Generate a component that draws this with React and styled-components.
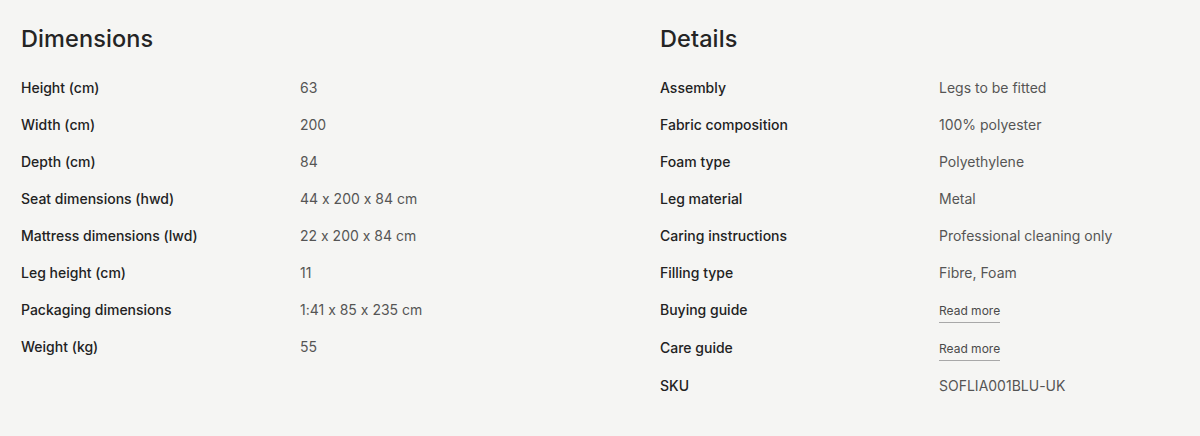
import React from "react";
import styled, { createGlobalStyle } from "styled-components";

const Global = createGlobalStyle`
  html, body { margin: 0; padding: 0; background: #f5f5f3; }
  body {
    font-family: Inter, "Noto Sans", sans-serif;
    font-feature-settings: "calt" 0;
    -webkit-font-smoothing: antialiased;
  }
`;

const Page = styled.div`
  display: grid;
  grid-template-columns: 639px 1fr;
  padding: 26px 21px 0 21px;
  height: 436px;
  box-sizing: border-box;
`;

const Section = styled.section`
  display: flex;
  flex-direction: column;
`;

const Heading = styled.h2`
  margin: 0 0 24px 0;
  font-size: 23.5px;
  line-height: 26px;
  font-weight: 500;
  color: #242424;
  letter-spacing: 0.1px;
`;

const Table = styled.dl`
  margin: 0;
  display: grid;
  grid-template-columns: 279px 1fr;
  grid-auto-rows: auto;
`;

const Label = styled.dt`
  margin: 0;
  font-size: 14px;
  line-height: 24px;
  font-weight: 500;
  color: #222;
  min-height: ${(p) => (p.$link ? "38px" : "37px")};
`;

const Value = styled.dd`
  margin: 0;
  font-size: 14px;
  line-height: 24px;
  font-weight: 400;
  color: #555;
`;

const ReadMore = styled.a`
  display: inline-block;
  font-size: 12px;
  line-height: 16px;
  color: #4a4a4a;
  text-decoration: none;
  padding: 5px 0 3px;
  border-bottom: 1px solid #a8a8a8;
`;

const dimensions = [
  ["Height (cm)", "63"],
  ["Width (cm)", "200"],
  ["Depth (cm)", "84"],
  ["Seat dimensions (hwd)", "44 x 200 x 84 cm"],
  ["Mattress dimensions (lwd)", "22 x 200 x 84 cm"],
  ["Leg height (cm)", "11"],
  ["Packaging dimensions", "1:41 x 85 x 235 cm"],
  ["Weight (kg)", "55"],
];

const details = [
  ["Assembly", "Legs to be fitted"],
  ["Fabric composition", "100% polyester"],
  ["Foam type", "Polyethylene"],
  ["Leg material", "Metal"],
  ["Caring instructions", "Professional cleaning only"],
  ["Filling type", "Fibre, Foam"],
  ["Buying guide", null],
  ["Care guide", null],
  ["SKU", "SOFLIA001BLU-UK"],
];

function Rows({ items }) {
  return (
    <Table>
      {items.map(([k, v]) => (
        <React.Fragment key={k}>
          <Label $link={v === null}>{k}</Label>
          <Value>{v === null ? <ReadMore href="#">Read more</ReadMore> : v}</Value>
        </React.Fragment>
      ))}
    </Table>
  );
}

export default function App() {
  return (
    <>
      <Global />
      <Page>
        <Section>
          <Heading>Dimensions</Heading>
          <Rows items={dimensions} />
        </Section>
        <Section>
          <Heading>Details</Heading>
          <Rows items={details} />
        </Section>
      </Page>
    </>
  );
}
